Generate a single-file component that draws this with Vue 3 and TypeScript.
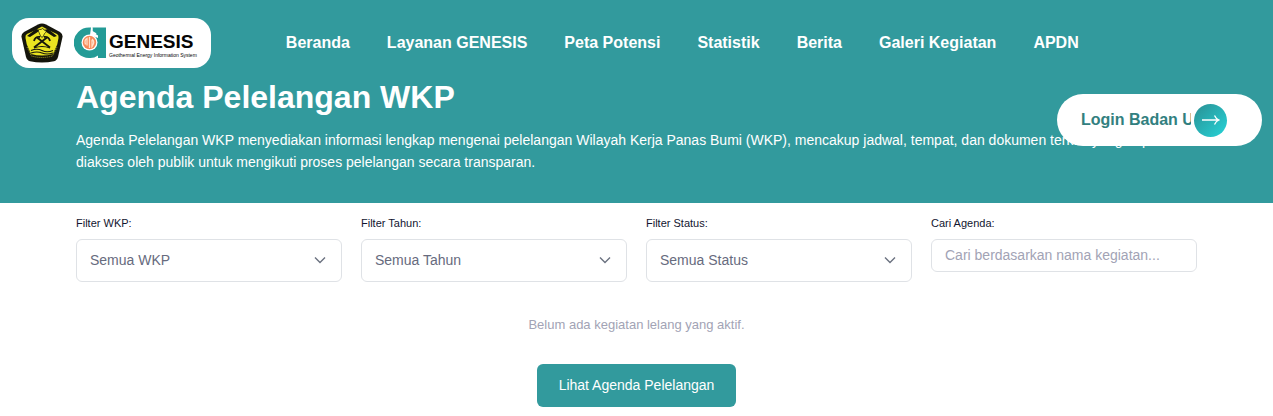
<script setup lang="ts">
import { ref } from 'vue'

interface Filter {
  id: string
  label: string
  placeholder: string
}

const navItems: string[] = [
  'Beranda',
  'Layanan GENESIS',
  'Peta Potensi',
  'Statistik',
  'Berita',
  'Galeri Kegiatan',
  'APDN',
]

const filters: Filter[] = [
  { id: 'filter-wkp', label: 'Filter WKP:', placeholder: 'Semua WKP' },
  { id: 'filter-tahun', label: 'Filter Tahun:', placeholder: 'Semua Tahun' },
  { id: 'filter-status', label: 'Filter Status:', placeholder: 'Semua Status' },
]

const search = ref('')
</script>

<template>
  <div class="page">
    <div class="hero">
      <header class="topbar">
        <a class="brand" href="#" aria-label="GENESIS">
          <svg class="emblem" viewBox="0 0 42 40" aria-hidden="true">
            <path d="M17 1.500Q21 -.5 25 1.500L39 9Q42 11 41.500 14L37 34Q36 37.500 33 38.200Q21 41 9 38.200Q6 37.500 5 34L.5 14Q0 11 3 9Z" fill="#15150c" />
            <path d="M21 3.500Q29 8 36 11Q38 12 37.500 15L34 33Q21 37 8 33L4.500 15Q4 12 6 11Q13 8 21 3.500Z" fill="#e9e320" />
            <path d="M6 13 15 6 19 7 16 9.500 9 14ZM36 13 27 6 23 7 26 9.500 33 14Z" fill="#15150c" />
            <path d="M18 9.500Q16 6 20 6.500Q22 4 23 7Q27 8 23.500 10.500L22 14H20Z" fill="#f6ef3b" stroke="#15150c" stroke-width=".7" />
            <path d="M13 24.500 26 14.500M29 24.500 16 14.500M13 18Q14 13.500 19 14M29 18Q28 13.500 23 14" fill="none" stroke="#15150c" stroke-width="1.800" />
            <path d="M13 25Q21 22 29 25M10 27.500Q16 25 21 27.500T32 27.500M10 30Q16 28 21 30T32 30" fill="none" stroke="#15150c" stroke-width="1.200" />
            <path d="M4 21 6 22 10 31Q21 34 32 31L36 22 38 21 35 35.500Q21 39 7 35.500Z" fill="#15150c" />
            <path d="M6 24 10.500 33Q21 36 31.500 33L36 24" fill="none" stroke="#c9c42a" stroke-width=".8" stroke-dasharray="1 1" />
          </svg>
          <svg class="logo" viewBox="0 0 32 32" aria-hidden="true">
            <path d="M15 .5H17V4L20 7H32V31H24V28.500Q20 31.500 15 31A15.250 15.250 0 0 1 15 .5Z" fill="#239b96" />
            <path d="M18.500 .5H32V9H24Q22.500 5.500 18.500 4Z" fill="#239b96" />
            <path d="M17 .5H18.500V5L24 8.500V11L16 8Z" fill="#fff" />
            <circle cx="15.500" cy="15.500" r="8" fill="#fff" />
            <circle cx="15.500" cy="15.500" r="6.700" fill="#f58a59" />
            <path d="M11.500 17.500Q10 13 13 11.500V18.500M15.500 10V21M18 12Q21.500 15 18 19.500V13" fill="none" stroke="#ffe0c8" stroke-width="1.300" />
          </svg>
          <span class="wordmark">
            <strong>GENESIS</strong>
            <small>Geothermal Energy Information System</small>
          </span>
        </a>
        <nav class="nav" aria-label="Menu utama">
          <a v-for="item in navItems" :key="item" href="#">{{ item }}</a>
        </nav>
      </header>

      <section class="intro">
        <h1>Agenda Pelelangan WKP</h1>
        <p>
          Agenda Pelelangan WKP menyediakan informasi lengkap mengenai pelelangan Wilayah Kerja Panas Bumi (WKP), mencakup jadwal, tempat, dan dokumen terkait yang dapat diakses oleh publik untuk mengikuti proses pelelangan secara transparan.
        </p>
      </section>

      <button class="login" type="button" aria-label="Login Badan Usaha">
        <span class="login-text">Login Badan Usaha</span>
        <span class="login-icon">
          <svg viewBox="0 0 18 12" aria-hidden="true">
            <path d="M0 6H17M12.500 1.500Q14 5 17 6Q14 7 12.500 10.500" fill="none" stroke="#fff" stroke-width="1.300" />
          </svg>
        </span>
      </button>
    </div>

    <main class="content">
      <form class="filters" @submit.prevent>
        <div v-for="f in filters" :key="f.id" class="field">
          <label :for="f.id">{{ f.label }}</label>
          <div class="select-wrap">
            <select :id="f.id">
              <option>{{ f.placeholder }}</option>
            </select>
            <svg class="chevron" viewBox="0 0 12 8" aria-hidden="true">
              <path d="M1 1.500 6 6.500 11 1.500" fill="none" stroke="#6b7280" stroke-width="1.400" />
            </svg>
          </div>
        </div>
        <div class="field">
          <label for="cari">Cari Agenda:</label>
          <input id="cari" v-model="search" type="text" placeholder="Cari berdasarkan nama kegiatan..." />
        </div>
      </form>

      <p class="empty">Belum ada kegiatan lelang yang aktif.</p>
      <button class="action" type="button">Lihat Agenda Pelelangan</button>
    </main>
  </div>
</template>

<style>
body {
  background: #fff;
}
</style>

<style scoped>
.page,
.page button,
.page select,
.page input {
  font-family: "Liberation Sans", Arial, sans-serif;
}

.page * {
  box-sizing: border-box;
}

.hero {
  position: relative;
  padding-bottom: 30px;
  background: #329a9d;
  color: #fff;
}

.topbar {
  display: flex;
  align-items: center;
  gap: 75px;
  padding: 18px 12px 0;
}

.brand {
  display: flex;
  align-items: center;
  height: 50px;
  padding: 0 14px 0 9px;
  border-radius: 17px;
  background: #fff;
  color: #050505;
  text-decoration: none;
}

.emblem {
  width: 42px;
  height: 40px;
}

.logo {
  width: 32px;
  height: 32px;
  margin: 0 3px 0 11px;
}

.wordmark {
  display: flex;
  flex-direction: column;
  padding-top: 4px;
}

.wordmark strong {
  font: 700 19px/20px "Liberation Sans", Arial, sans-serif;
}

.wordmark small {
  font: 5px/6px "Liberation Sans", Arial, sans-serif;
  white-space: nowrap;
}

.nav {
  display: flex;
  gap: 37px;
}

.nav a {
  color: #fff;
  font-size: 16px;
  font-weight: 700;
  line-height: 20px;
  text-decoration: none;
  white-space: nowrap;
}

.intro {
  padding: 8px 76px 0;
}

.intro h1 {
  margin: 0;
  font-size: 32px;
  line-height: 42px;
}

.intro p {
  margin: 11px 0 0;
  font-size: 14px;
  line-height: 22px;
}

.login {
  position: absolute;
  top: 94px;
  right: 11px;
  display: flex;
  align-items: center;
  gap: 3px;
  width: 205px;
  height: 52px;
  padding: 0 35px 0 24px;
  border: 0;
  border-radius: 26px;
  background: #fff;
  color: #32807f;
}

.login-text {
  flex: 1;
  min-width: 0;
  overflow: hidden;
  font-size: 16px;
  font-weight: 700;
  line-height: 20px;
  text-align: left;
  white-space: nowrap;
}

.login-icon {
  display: flex;
  flex: none;
  align-items: center;
  justify-content: center;
  width: 33px;
  height: 33px;
  border-radius: 50%;
  background: linear-gradient(135deg, #2b8f93, #25d4d8);
}

.login-icon svg {
  width: 18px;
  height: 12px;
}

.content {
  display: flex;
  flex-direction: column;
  align-items: center;
  padding: 13px 76px 9px;
}

.filters {
  display: grid;
  grid-template-columns: repeat(4, 1fr);
  gap: 19px;
  align-self: stretch;
}

.field label {
  display: block;
  margin-bottom: 9px;
  color: #12152f;
  font-size: 11px;
  line-height: 14px;
}

.select-wrap {
  position: relative;
}

.field select,
.field input {
  display: block;
  width: 100%;
  height: 43px;
  padding: 0 13px 2px;
  border: 1px solid #dfe2e6;
  border-radius: 6px;
  background: #fff;
  color: #676b7e;
  font-size: 14px;
  appearance: none;
}

.field input {
  height: 33px;
}

.field input::placeholder {
  color: #a2a3b5;
  opacity: 1;
}

.chevron {
  position: absolute;
  top: 17px;
  right: 16px;
  width: 12px;
  height: 8px;
  pointer-events: none;
}

.empty {
  margin: 34px 0 0;
  color: #a2a3b5;
  font-size: 13px;
  line-height: 18px;
}

.action {
  height: 43px;
  margin-top: 30px;
  padding: 0 22px 2px;
  border: 0;
  border-radius: 6px;
  background: #329a9d;
  color: #fff;
  font-size: 14px;
}
</style>
